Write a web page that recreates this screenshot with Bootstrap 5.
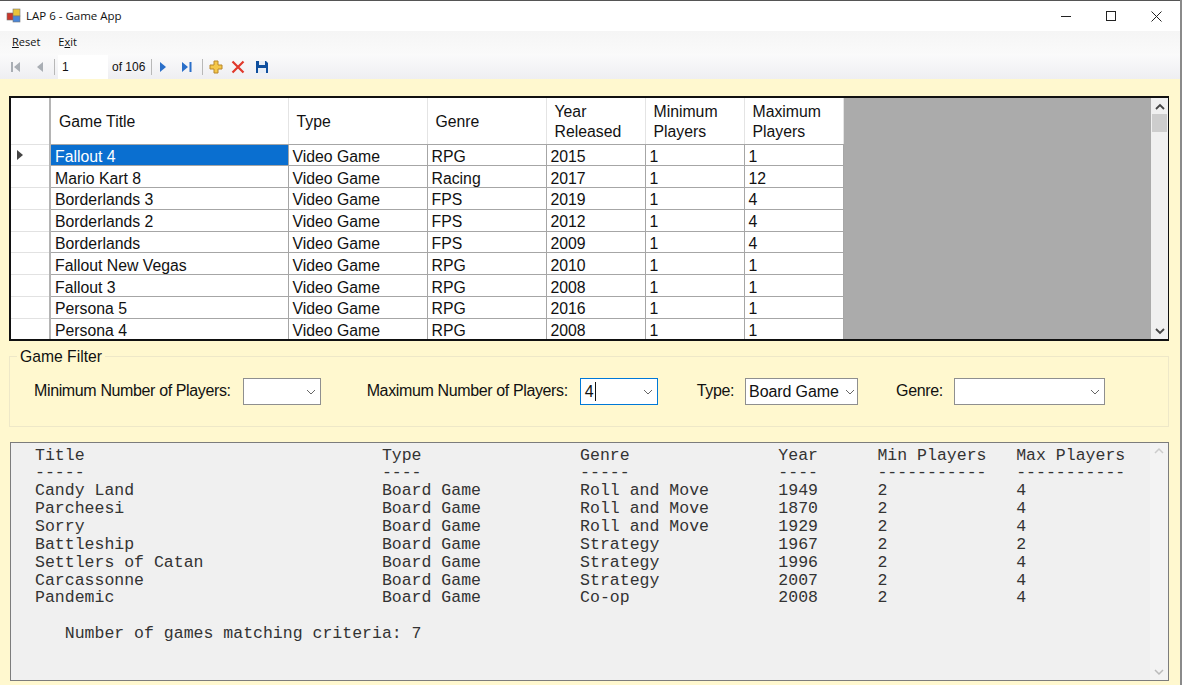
<!DOCTYPE html>
<html lang="en">
<head>
    <meta charset="UTF-8">
    <title>LAP 6 - Game App</title>
    <link href="https://cdn.jsdelivr.net/npm/bootstrap@5.3.0/dist/css/bootstrap.min.css" rel="stylesheet">
    <style>
        html, body { height: 685px; overflow: hidden; }
        body { background: #fff8cf; font-family: "Liberation Sans", Arial, sans-serif; color: #111; border-right: 2px solid #8a8a8a; }
        .title-bar { height: 31px; background: #fff; padding-left: 6px; padding-right: 1px; font-family: "Open Sans", sans-serif; font-size: 11.5px; border-top: 1px solid #555; }
        .title-icon { margin-right: 4px; }
        .title-btns svg { display: block; }
        .title-btn { width: 45px; height: 30px; }
        .menu-bar { height: 23px; background: linear-gradient(#f5f5f5, #fafafa); font-family: "Open Sans", sans-serif; font-size: 11px; padding-left: 12px; gap: 18px; }
        .tool-bar { height: 25px; background: linear-gradient(#fbfbfb, #eeeef2); font-size: 12px; padding-left: 10px; }
        .tool-sep { width: 1px; height: 16px; background: #b8b8b8; }
        .pos-box { width: 50px; height: 24px; background: #fff; padding: 3px 4px; margin: 0 4px 0 3px; }
        .gap-first { margin-right: 14px; }
        .gap-prev { margin-right: 10px; }
        .gap-count { margin: 0 7px 0 6px; }
        .gap-next { margin-right: 14px; }
        .gap-last { margin-right: 9px; }
        .gap-sep { margin-right: 6px; }
        .gap-add { margin-right: 8px; }
        .gap-del { margin-right: 10px; }

        .grid-wrap { margin: 17px 11px 0 9px; height: 245px; border: 2px solid #111; border-right-width: 1px; background: #ababab; }
        .grid-main { width: 1139px; overflow: hidden; }
        .game-grid { border-collapse: collapse; table-layout: fixed; width: 832px; font-size: 15.8px; background: #fff; }
        .game-grid th, .game-grid td { border: 1px solid #a6a6a6; padding: 3px 4px 0; font-weight: 400; height: 21.8px; line-height: 17px; white-space: nowrap; overflow: hidden; }
        .game-grid tr > :first-child { border-left: 0; border-right: 2px solid #b4b4b4; border-top-color: #e2e2e2; border-bottom-color: #e2e2e2; background: #fff; padding: 0; }
        .game-grid thead th { height: 46px; line-height: 20px; padding: 3px 4px 0 8px; border-top: 0; border-left-color: #e4e4e4; border-right-color: #e4e4e4; border-bottom-color: #a6a6a6; vertical-align: middle; }
        .game-grid .current { background: #0a6fd0; color: #fff; }
        .col-head { width: 39px; }
        .col-title { width: 238px; }
        .col-type { width: 139px; }
        .col-genre { width: 119px; }
        .col-num { width: 99px; }
        .row-arrow { display: block; margin-left: 6px; }
        .side-scroll { width: 17px; background: #f0f0f0; }
        .side-scroll .thumb { height: 18px; margin: 0 1px; background: #cdcdcd; }
        .arrow-cell { height: 16px; }

        .filter-box { margin: 15px 11px 0 9px; height: 71px; border: 1px solid #eee8c8; position: relative; }
        .filter-legend { position: absolute; left: 7px; top: -9px; padding: 0 3px; background: #fff8cf; font-size: 15.7px; line-height: 18px; }
        .filter-row { padding-top: 21px; font-size: 16px; }
        .filter-label { letter-spacing: -.37px; margin-bottom: 2px; }
        .lbl-min { margin-left: 24px; }
        .lbl-max { margin-left: 46px; }
        .lbl-type { margin-left: 39px; }
        .lbl-genre { margin-left: 38px; }
        .combo { height: 27px; margin-left: 12px; background: #fff; border: 1px solid #8f8f8f; padding: 0 4px; line-height: 25px; letter-spacing: -.1px; }
        .combo.active-combo { border-color: #0078d7; }
        .combo-type { margin-left: 11px; width: 113px; padding: 0 2px 0 3px; }
        .combo-min { width: 78px; }
        .combo-max { width: 78px; }
        .combo-genre { margin-left: 11px; width: 151px; }
        .caret-bar { width: 1px; height: 19px; background: #111; margin-left: 1px; }

        .out-box { margin: 15px 11px 0 10px; height: 239px; background: #f0f0f0; border: 1px solid #7c7c7c; }
        .out-text { flex: 1; margin: 0; padding: 3.6px 0 0 24px; font-family: "Liberation Mono", "Courier New", monospace; font-size: 16.52px; line-height: 17.85px; color: #333; overflow: hidden; }
        .out-scroll { width: 18px; background: #f3f3f3; }
    </style>
</head>
<body>
    <div class="title-bar d-flex align-items-center">
        <svg width="16" height="16" viewBox="0 0 16 16" class="title-icon">
            <rect x="1" y="5" width="7" height="7" fill="#c9372c" stroke="#777" stroke-width=".6"/>
            <rect x="7" y="1" width="7" height="7" fill="#e9c33a" stroke="#777" stroke-width=".6"/>
            <rect x="7" y="8" width="7" height="6" fill="#4a86d8" stroke="#777" stroke-width=".6"/>
        </svg>
        <span>LAP 6 - Game App</span>
        <div class="title-btns d-flex ms-auto">
            <div class="title-btn d-flex align-items-center justify-content-center"><svg width="11" height="11"><path d="M0 5.500h10" stroke="#222"/></svg></div>
            <div class="title-btn d-flex align-items-center justify-content-center"><svg width="11" height="11"><rect x=".5" y=".5" width="9" height="9" fill="none" stroke="#222"/></svg></div>
            <div class="title-btn d-flex align-items-center justify-content-center"><svg width="11" height="11"><path d="M.5.5l10 10M10.500.5l-10 10" stroke="#222"/></svg></div>
        </div>
    </div>

    <div class="menu-bar d-flex align-items-center">
        <span><u>R</u>eset</span>
        <span>E<u>x</u>it</span>
    </div>

    <div class="tool-bar d-flex align-items-center">
        <svg width="12" height="14" viewBox="0 0 12 14" class="gap-first"><path d="M1 2h2v10H1zM10 2v10L4 7z" fill="#a9aeb4"/></svg>
        <svg width="8" height="14" viewBox="0 0 8 14" class="gap-prev"><path d="M7 2v10L1 7z" fill="#a9aeb4"/></svg>
        <span class="tool-sep"></span>
        <div class="pos-box">1</div>
        <span>of 106</span>
        <span class="tool-sep gap-count"></span>
        <svg width="8" height="14" viewBox="0 0 8 14" class="gap-next"><path d="M1 2v10l6-5z" fill="#2a6fc9"/></svg>
        <svg width="12" height="14" viewBox="0 0 12 14" class="gap-last"><path d="M1 2v10l6-5zM8.500 2h2v10h-2z" fill="#2a6fc9"/></svg>
        <span class="tool-sep gap-sep"></span>
        <svg width="14" height="14" viewBox="0 0 14 14" class="gap-add"><path d="M5 1h4v4h4v4H9v4H5V9H1V5h4z" fill="#f5c84a" stroke="#b8862a"/></svg>
        <svg width="14" height="14" viewBox="0 0 14 14" class="gap-del"><path d="M1.500 1.500l11 11M12.500 1.500l-11 11" stroke="#e0392b" stroke-width="2.200"/></svg>
        <svg width="14" height="14" viewBox="0 0 14 14"><path d="M1 1h10l2 2v10H1z" fill="#0f4f9e"/><rect x="4" y="1" width="6" height="4" fill="#e8eef6"/><rect x="3" y="8" width="8" height="5" fill="#e8eef6"/></svg>
    </div>

    <div class="grid-wrap d-flex justify-content-between">
        <div class="grid-main">
            <table class="game-grid">
                <colgroup>
                    <col class="col-head"><col class="col-title"><col class="col-type"><col class="col-genre"><col class="col-num"><col class="col-num"><col class="col-num">
                </colgroup>
                <thead>
                    <tr><th></th><th>Game Title</th><th>Type</th><th>Genre</th><th>Year<br>Released</th><th>Minimum<br>Players</th><th>Maximum<br>Players</th></tr>
                </thead>
                <tbody id="gridRows"></tbody>
            </table>
        </div>
        <div class="side-scroll d-flex flex-column">
            <div class="arrow-cell d-flex align-items-center justify-content-center"><svg width="10" height="7"><path d="M1 6l4-4 4 4" fill="none" stroke="#444" stroke-width="1.800"/></svg></div>
            <div class="thumb"></div>
            <div class="arrow-cell d-flex align-items-center justify-content-center mt-auto"><svg width="10" height="7"><path d="M1 1l4 4 4-4" fill="none" stroke="#444" stroke-width="1.800"/></svg></div>
        </div>
    </div>

    <div class="filter-box">
        <span class="filter-legend">Game Filter</span>
        <div class="filter-row d-flex align-items-center">
            <span class="filter-label lbl-min">Minimum Number of Players:</span>
            <div class="combo combo-min d-flex align-items-center justify-content-end"><svg width="10" height="6"><path d="M1 1l4 4 4-4" fill="none" stroke="#666"/></svg></div>
            <span class="filter-label lbl-max">Maximum Number of Players:</span>
            <div class="combo combo-max active-combo d-flex align-items-center">4<span class="caret-bar"></span><svg class="ms-auto" width="10" height="6"><path d="M1 1l4 4 4-4" fill="none" stroke="#666"/></svg></div>
            <span class="filter-label lbl-type">Type:</span>
            <div class="combo combo-type d-flex align-items-center">Board Game<svg class="ms-auto" width="10" height="6"><path d="M1 1l4 4 4-4" fill="none" stroke="#666"/></svg></div>
            <span class="filter-label lbl-genre">Genre:</span>
            <div class="combo combo-genre d-flex align-items-center justify-content-end"><svg width="10" height="6"><path d="M1 1l4 4 4-4" fill="none" stroke="#666"/></svg></div>
        </div>
    </div>

    <div class="out-box d-flex">
<pre class="out-text" id="outText"></pre>
        <div class="out-scroll d-flex flex-column justify-content-between align-items-center py-1">
            <svg width="10" height="7"><path d="M1 6l4-4 4 4" fill="none" stroke="#ccc" stroke-width="1.500"/></svg>
            <svg width="10" height="7"><path d="M1 1l4 4 4-4" fill="none" stroke="#bbb" stroke-width="1.500"/></svg>
        </div>
    </div>

    <script>
        const games = [
            ["Fallout 4", "Video Game", "RPG", "2015", "1", "1"],
            ["Mario Kart 8", "Video Game", "Racing", "2017", "1", "12"],
            ["Borderlands 3", "Video Game", "FPS", "2019", "1", "4"],
            ["Borderlands 2", "Video Game", "FPS", "2012", "1", "4"],
            ["Borderlands", "Video Game", "FPS", "2009", "1", "4"],
            ["Fallout New Vegas", "Video Game", "RPG", "2010", "1", "1"],
            ["Fallout 3", "Video Game", "RPG", "2008", "1", "1"],
            ["Persona 5", "Video Game", "RPG", "2016", "1", "1"],
            ["Persona 4", "Video Game", "RPG", "2008", "1", "1"]
        ];
        document.getElementById("gridRows").innerHTML = games.map((g, i) => {
            const head = i === 0 ? '<svg class="row-arrow" width="6" height="10"><path d="M0 0v10l6-5z" fill="#444"/></svg>' : "";
            const cells = g.map((v, j) => `<td class="${i === 0 && j === 0 ? "current" : ""}">${v}</td>`).join("");
            return `<tr><td>${head}</td>${cells}</tr>`;
        }).join("");

        const matches = [
            ["Candy Land", "Board Game", "Roll and Move", "1949", "2", "4"],
            ["Parcheesi", "Board Game", "Roll and Move", "1870", "2", "4"],
            ["Sorry", "Board Game", "Roll and Move", "1929", "2", "4"],
            ["Battleship", "Board Game", "Strategy", "1967", "2", "2"],
            ["Settlers of Catan", "Board Game", "Strategy", "1996", "2", "4"],
            ["Carcassonne", "Board Game", "Strategy", "2007", "2", "4"],
            ["Pandemic", "Board Game", "Co-op", "2008", "2", "4"]
        ];
        const widths = [35, 20, 20, 10, 14, 0];
        const line = r => r.map((v, i) => v.padEnd(widths[i])).join("");
        document.getElementById("outText").textContent = [
            line(["Title", "Type", "Genre", "Year", "Min Players", "Max Players"]),
            line(["-----", "----", "-----", "----", "-----------", "-----------"]),
            ...matches.map(line),
            "",
            "   Number of games matching criteria: 7"
        ].join("\n");
    </script>
    <script src="https://cdn.jsdelivr.net/npm/bootstrap@5.3.0/dist/js/bootstrap.bundle.min.js"></script>
</body>
</html>
